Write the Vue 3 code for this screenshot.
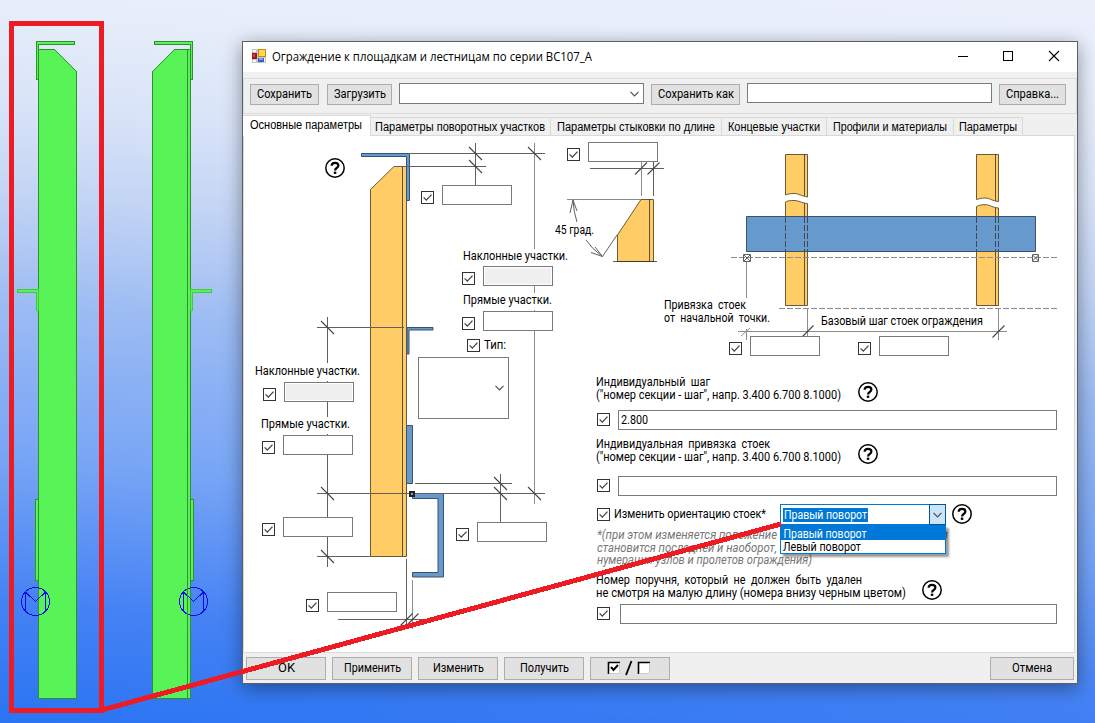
<script setup>
import { ref } from 'vue'

const tabs = [
  { title: 'Основные параметры', width: 128, text: 113 },
  { title: 'Параметры поворотных участков', width: 180, text: 171 },
  { title: 'Параметры стыковки по длине', width: 171, text: 159 },
  { title: 'Концевые участки', width: 105, text: 93 },
  { title: 'Профили и материалы', width: 127, text: 115 },
  { title: 'Параметры', width: 69, text: 59 },
]
const activeTab = ref(0)

// Controls pinned over the drawing; coordinates share the drawing's own space.
const originX = 244
const originY = 136
const pins = [
  { cx: 421, cy: 191, x: 442, y: 185 },
  { cx: 462, cy: 272, x: 483, y: 266, off: true },
  { cx: 462, cy: 317, x: 483, y: 311 },
  { cx: 567, cy: 148, x: 588, y: 142 },
  { cx: 263, cy: 388, x: 284, y: 382, off: true },
  { cx: 262, cy: 441, x: 283, y: 435 },
  { cx: 262, cy: 523, x: 283, y: 517 },
  { cx: 456, cy: 528, x: 477, y: 522 },
  { cx: 306, cy: 599, x: 327, y: 592 },
  { cx: 729, cy: 342, x: 750, y: 336 },
  { cx: 858, cy: 342, x: 879, y: 336 },
]
const at = (x, y) => ({ left: x - originX + 'px', top: y - originY + 'px' })

const captions = [
  { x: 463, y: 260, w: 105, t: 'Наклонные участки.' },
  { x: 463, y: 304, w: 89, t: 'Прямые участки.' },
  { x: 255, y: 375, w: 105, t: 'Наклонные участки.' },
  { x: 261, y: 428, w: 89, t: 'Прямые участки.' },
  { x: 484, y: 349, w: 22, t: 'Тип:' },
  { x: 555, y: 234, w: 39, t: '45 град.' },
  { x: 664, y: 309, w: 82, t: 'Привязка стоек', airy: true },
  { x: 664, y: 322, w: 106, t: 'от начальной точки.', airy: true },
  { x: 821, y: 325, w: 162, t: 'Базовый шаг стоек ограждения' },
]
const formText = [
  { x: 596, y: 386, w: 114, t: 'Индивидуальный шаг', airy: true },
  { x: 596, y: 399, w: 245, t: '("номер секции - шаг", напр. 3.400 6.700 8.1000)' },
  { x: 596, y: 448, w: 174, t: 'Индивидуальная привязка стоек', airy: true },
  { x: 596, y: 461, w: 245, t: '("номер секции - шаг", напр. 3.400 6.700 8.1000)' },
  { x: 614, y: 518, w: 152, t: 'Изменить ориентацию стоек*' },
  { x: 596, y: 584, w: 266, t: 'Номер поручня, который не должен быть удален', airy: true },
  { x: 596, y: 597, w: 310, t: 'не смотря на малую длину (номера внизу черным цветом)' },
]
const notes = [
  { x: 597, y: 539, w: 180, t: '*(при этом изменяется положение' },
  { x: 941, y: 539, w: 7, t: 'я' },
  { x: 597, y: 552, w: 180, t: 'становится последней и наоборот,' },
  { x: 597, y: 564, w: 215, t: 'нумерации узлов и пролетов ограждения)' },
]
const backslashes = [
  [475.5, 153.5], [475.5, 166.5], [534.5, 153.5], [327.5, 327.5], [327.5, 493.5],
  [327.5, 556.5], [500.5, 483.5], [500.5, 493.5], [534.5, 493.5],
]
const slashes = [
  [406.5, 619.5], [412.5, 619.5], [641, 168.5], [653.5, 168.5],
  [807.5, 331.5], [998.5, 331.5],
]
const helps = [[335, 168], [868, 392], [868, 454], [962, 514], [932, 590]]
const commands = [
  { t: 'OK', w: 17 },
  { t: 'Применить', w: 57 },
  { t: 'Изменить', w: 51 },
  { t: 'Получить', w: 49 },
]
const note = ref('2.800')
</script>

<template>
  <main class="desktop">
    <svg class="model" viewBox="0 0 242 723" shape-rendering="crispEdges">
      <defs>
        <g id="section">
          <path class="green" d="M38.5 49.5H54.5L76.5 71.5V698.5H38.5Z" />
          <path class="green" d="M36.5 41.5H74.5V44.5H38.5V79.5H36.5Z" />
          <path class="green pale" d="M17.5 289.5H38.5V310.5H36.5V292.5H17.5Z" />
          <path class="green" d="M35.5 499.5H38.5V580.5H35.5Z" />
          <circle class="mark" cx="35.5" cy="601.5" r="14" />
          <path class="mark" d="M25.5 611V592L35.5 601.5L45.5 592V611" />
        </g>
      </defs>
      <use href="#section" />
      <use href="#section" transform="translate(229 0) scale(-1 1)" />
      <path class="green" d="M187.5 50V698" />
    </svg>

    <section class="window">
      <header class="titlebar">
        <svg class="logo" viewBox="0 0 16 16">
          <path fill="#c4c4c4" d="M1 1h14v14H1z" />
          <path fill="#fff" d="M2 2h3v2H2zM7 10h2v4H7zM2 12h3v2H2zM13 10h1v4h-1z" />
          <path fill="#a4151b" d="M1 5h5v6H1z" /><path fill="#e0413d" d="M2 6h2v3H2z" />
          <path fill="#c98a10" d="M7 1h8v8H7z" /><path fill="#ffd65a" d="M8 2h6v6H8z" />
          <path fill="#2f62c8" d="M7 10h6v4H7z" /><path fill="#72a5f5" d="M8 10h4v2H8z" />
        </svg>
        <svg class="title" viewBox="0 0 330 20"><text x="0" y="14" textLength="320" lengthAdjust="spacingAndGlyphs">Ограждение к площадкам и лестницам по серии BC107_A</text></svg>
        <svg class="controls" viewBox="0 0 120 30">
          <path d="M5 14.5H15M50.5 9.5H59.5V18.5H50.5Z" shape-rendering="crispEdges" />
          <path d="M96 9L106 19M106 9L96 19" />
        </svg>
      </header>

      <div class="toolbar">
        <button class="btn save"><svg width="55" height="14"><text y="9.5" textLength="55" lengthAdjust="spacingAndGlyphs">Сохранить</text></svg></button>
        <button class="btn load"><svg width="52" height="14"><text y="9.5" textLength="52" lengthAdjust="spacingAndGlyphs">Загрузить</text></svg></button>
        <div class="box preset"><svg class="chev" viewBox="0 0 9 6"><path d="M.5 .8L4.5 4.8L8.5 .8" /></svg></div>
        <button class="btn saveas"><svg width="76" height="14"><text y="9.5" textLength="76" lengthAdjust="spacingAndGlyphs">Сохранить как</text></svg></button>
        <div class="box name"></div>
        <button class="btn help"><svg width="53" height="14"><text y="9.5" textLength="53" lengthAdjust="spacingAndGlyphs">Справка...</text></svg></button>
      </div>

      <nav class="tabs">
        <button
          v-for="(tab, i) in tabs" :key="tab.title" class="tab" :class="{ active: i === activeTab }"
          :style="{ width: tab.width + 'px' }" @click="activeTab = i"
        ><svg :width="tab.text" height="16"><text y="11.5" :textLength="tab.text - 1" lengthAdjust="spacingAndGlyphs">{{ tab.title }}</text></svg></button>
      </nav>

      <div class="page">
        <svg class="drawing" viewBox="244 136 830 516">
          <!-- railing post section -->
          <path class="wood" d="M370.5 189.5L394 166.5H406.5V556.5H370.5Z" />
          <path class="ink" d="M402.5 166V556" />
          <path class="steel" d="M361.5 153.5H409.5V200.5H406.5V156.5H361.5Z" />
          <path class="steel" d="M407 327.5H433V330H409V354H407Z" />
          <path class="steel" d="M406.5 425.5H412.5V483.5H406.5Z" />
          <path class="steel" d="M412.5 493.5H443.5V577H412.5V572.5H438V498.5H412.5Z" />
          <path class="dim" d="M410 153.5H545M394 166.5H486M475.5 143V185M317 327.5H404M317 493.5H545M317 556.5H370M415 483.5H512M500.5 474V522M406.5 559V629M338 619.5H425" />
          <path class="dim" d="M327.5 317V363M327.5 381V382M327.5 402V417M327.5 434V435M327.5 455V517M327.5 537V567" />
          <path class="dim soft" d="M534.5 143V249M534.5 286V293M534.5 310V311M534.5 331V504M412.5 580V629" />
          <path fill="#222" d="M409 491h6v6h-6z" /><path fill="#99a" d="M411 493h2v2h-2z" />

          <!-- cut corner detail -->
          <path class="wood" d="M641 199.5L617.5 235V261.5H653.5V199.5Z" />
          <path class="ink" d="M649.5 199V261M613 261.5H657" />
          <path class="dim" d="M590 168.5H664M653.5 162V196M617 235L602.5 256.5M573 200Q573.5 212 577 222M570 213L573 200L577 211M586 240Q592 249 602.5 256.5L591 252.5M602.5 256.5L595 247" />
          <path class="dim soft" d="M641.5 162V196M567 199.5H641" />

          <!-- post layout along the handrail -->
          <path class="wood" d="M785.5 154.5H807.5V197C801 196 799 193.5 794 193.5C790 193.5 788 194 785.5 195Z" />
          <path class="wood" d="M785.5 305.5V202C788 200.5 791 200.5 794 200.5C799 200.5 801 203 807.5 203.5V305.5Z" />
          <path class="wood" d="M976.5 154.5H998.5V201.5C992 201 990 198 985 198C981 198 979 199 976.5 199.5Z" />
          <path class="wood" d="M976.5 305.5V206.5C979 205 982 204.7 985 204.7C990 204.7 992 207.5 998.5 208V305.5Z" />
          <path class="ink" d="M804.5 154V196M804.5 203V305M995.5 154V201M995.5 208V305" />
          <path class="steel" d="M746.5 216.5H1035.5V251.5H746.5Z" />
          <path class="ink dash" d="M785.5 217V251M804.5 217V251M807.5 217V251M976.5 217V251M995.5 217V251M998.5 217V251" />
          <path class="dim soft dash" d="M731 257.5H1057M779 308.5H1057" />
          <path class="dim" d="M743.5 254.5H750.5V261.5H743.5ZM744 255L750 261M750 255L744 261M1032.5 254.5H1038.5V261.5H1032.5ZM1032.5 255L1038.5 261M1038.5 255L1032.5 261" />
          <path class="dim soft" d="M746.5 262V298M746.5 329V340M807.5 308V336M998.5 308V340M738 331.5H1007M741 336L750 328" />

          <path v-for="([x, y], i) in backslashes" :key="'b' + i" class="tick" :d="`M${x - 6.5} ${y - 6.5}l13 13`" />
          <path v-for="([x, y], i) in slashes" :key="'s' + i" class="tick" :d="`M${x - 6} ${y + 6}l12 -12`" />
          <text v-for="c in captions" :key="c.x + '-' + c.y" :class="{ airy: c.airy }" :x="c.x" :y="c.y" :textLength="c.w" lengthAdjust="spacingAndGlyphs">{{ c.t }}</text>
          <text v-for="c in formText" :key="'f' + c.y" :class="{ airy: c.airy }" :x="c.x" :y="c.y" :textLength="c.w" lengthAdjust="spacingAndGlyphs">{{ c.t }}</text>
          <text v-for="(c, i) in notes" :key="'n' + i" class="note" :x="c.x" :y="c.y" :textLength="c.w" lengthAdjust="spacingAndGlyphs">{{ c.t }}</text>
          <g v-for="([x, y], i) in helps" :key="'h' + i" class="q">
            <circle :cx="x" :cy="y" r="9.2" />
            <path :d="`M${x - 3.4} ${y - 2.2}q.2 -3 3.4 -3q3.4 0 3.4 2.7q0 1.4 -1.7 2.5q-1.6 1 -1.6 2.4`" />
            <path :d="`M${x - 1.2} ${y + 3.6}h2.5v2.3h-2.5z`" class="dot" />
          </g>
        </svg>

        <template v-for="(p, i) in pins" :key="i">
          <i class="check pin" :style="at(p.cx, p.cy)"><svg viewBox="0 0 11 11"><path d="M1.6 5.4L4.3 8.1L9.5 2.6" /></svg></i>
          <div class="box field pin" :class="{ off: p.off }" :style="at(p.x, p.y)"></div>
        </template>
        <i class="check pin" :style="at(467, 339)"><svg viewBox="0 0 11 11"><path d="M1.6 5.4L4.3 8.1L9.5 2.6" /></svg></i>
        <div class="box kind pin" :style="at(418, 357)"><svg class="chev" viewBox="0 0 9 6"><path d="M.5 .8L4.5 4.8L8.5 .8" /></svg></div>

        <form class="form" @submit.prevent>
          <div class="row first"><i class="check"><svg viewBox="0 0 11 11"><path d="M1.6 5.4L4.3 8.1L9.5 2.6" /></svg></i><div class="box wide"><svg width="40" height="16"><text y="12" textLength="27" lengthAdjust="spacingAndGlyphs">{{ note }}</text></svg></div></div>
          <div class="row second"><i class="check"><svg viewBox="0 0 11 11"><path d="M1.6 5.4L4.3 8.1L9.5 2.6" /></svg></i><div class="box wide"></div></div>
          <div class="row turn">
            <i class="check"><svg viewBox="0 0 11 11"><path d="M1.6 5.4L4.3 8.1L9.5 2.6" /></svg></i>
            <div class="combo">
              <span class="picked"><svg width="85" height="14"><text x="1" y="10.5" textLength="83" lengthAdjust="spacingAndGlyphs">Правый поворот</text></svg></span>
              <span class="arrow"><svg class="chev" viewBox="0 0 9 6"><path d="M.5 .8L4.5 4.8L8.5 .8" /></svg></span>
              <ul class="menu">
                <li class="on"><svg width="85" height="13"><text x=".5" y="11.5" textLength="83" lengthAdjust="spacingAndGlyphs">Правый поворот</text></svg></li>
                <li><svg width="85" height="13"><text y="10.5" textLength="78" lengthAdjust="spacingAndGlyphs">Левый поворот</text></svg></li>
              </ul>
            </div>
          </div>
          <div class="row last"><i class="check"><svg viewBox="0 0 11 11"><path d="M1.6 5.4L4.3 8.1L9.5 2.6" /></svg></i><div class="box wide"></div></div>
        </form>
      </div>

      <footer class="footer">
        <button v-for="c in commands" :key="c.t" class="btn cmd"><svg :width="c.w" height="14"><text y="10" :textLength="c.w" lengthAdjust="spacingAndGlyphs">{{ c.t }}</text></svg></button>
        <button class="btn cmd">
          <svg class="toggle" width="44" height="18" viewBox="0 0 44 18">
            <path d="M1 3h12v12H1zM31 3h12v12H31z" fill="#fff" />
            <path d="M1.5 15V3.5H13M31.5 15V3.5H43" fill="none" stroke="#000" stroke-width="1.6" />
            <path d="M2 14.5H12.5V4M32 14.5H42.5V4" fill="none" stroke="#ccc" />
            <path d="M4 8l2.5 3L11 6" fill="none" stroke="#000" stroke-width="2" />
            <path d="M19 16L24.5 2" stroke="#000" stroke-width="1.8" />
          </svg>
        </button>
        <button class="btn cancel"><svg width="40" height="14"><text y="10" textLength="40" lengthAdjust="spacingAndGlyphs">Отмена</text></svg></button>
      </footer>
    </section>

    <svg class="callout" viewBox="0 0 1095 723" shape-rendering="crispEdges">
      <path d="M11.5 23.5H101.5V710.5H11.5Z" />
      <path d="M102 710L781 524" />
    </svg>
  </main>
</template>

<style>
html, body { margin: 0; overflow: hidden; }
</style>

<style scoped>
* { box-sizing: border-box; }
.desktop {
  position: relative; width: 1095px; height: 723px; overflow: hidden;
  font-family: Roboto, "Liberation Sans", sans-serif; font-size: 12px; color: #000;
  background: linear-gradient(185deg, #ebf0fb 0, #e7eefa 12%, #d9e4f8 24%, #c1d3f4 36%, #9bbbf3 49%, #76a4f5 68%, #4582f4 85%, #2a74f3 100%);
}
svg { display: block; flex: none; overflow: visible; }
text { font-size: 12px; fill: #000; }
.airy { word-spacing: 3px; }
.model { position: absolute; left: 0; top: 0; width: 242px; height: 723px; }
.green { fill: #57f357; stroke: #2f912f; }
.pale { stroke: #43c843; }
.mark { fill: none; stroke: #0a0af0; }
.callout { position: absolute; inset: 0; width: 1095px; height: 723px; pointer-events: none; }
.callout path { fill: none; stroke: #ed1c24; stroke-width: 5; }
.window {
  position: absolute; left: 242px; top: 41px; width: 836px; height: 643px;
  display: flex; flex-direction: column; background: #f0f0f0; border: 1px solid #5a5f69;
  box-shadow: 0 4px 18px rgba(0, 0, 0, .4);
}
.titlebar { display: flex; align-items: center; height: 30px; background: #fff; padding-left: 8px; }
.logo { width: 16px; height: 16px; margin-top: -2px; }
.title { width: 330px; height: 20px; margin-left: 5px; }
.title text { font-family: "Open Sans", "Noto Sans", sans-serif; font-size: 12px; }
.controls { width: 120px; height: 30px; margin-left: auto; margin-right: 4px; }
.controls path { fill: none; stroke: #000; stroke-width: 1.1; }
.toolbar {
  display: flex; height: 36px; margin-top: 6px; padding: 4px 0 0 6px;
  border: 1px solid #dcdcdc;
}
.btn {
  display: flex; align-items: center; justify-content: center; flex: none;
  padding: 0; font: inherit; background: #e1e1e1; border: 1px solid #adadad;
}
.toolbar .btn { height: 21px; margin-top: 1px; }
.box { background: #fff; border: 1px solid #7a7a7a; }
.chev { width: 9px; height: 6px; }
.chev path { fill: none; stroke: #505050; stroke-width: 1.2; }
.save { width: 69px; }
.load { width: 65px; margin-left: 8px; }
.preset { display: flex; align-items: center; justify-content: flex-end; width: 245px; height: 21px; margin-left: 7px; padding-right: 4px; }
.saveas { width: 89px; margin-left: 7px; }
.name { width: 245px; height: 20px; margin-left: 7px; }
.help { width: 67px; margin-left: 7px; }
.tabs { display: flex; align-items: flex-end; height: 20px; margin-top: 1px; }
.tab {
  display: flex; align-items: center; justify-content: center; height: 18px; padding: 0;
  background: #f0f0f0; border: 1px solid #d9d9d9; border-bottom: 0; border-left: 0;
}
.tab.active { position: relative; z-index: 1; height: 21px; padding-bottom: 2px; background: #fff; margin-bottom: -1px; }
.page {
  position: relative; width: 832px; height: 518px; background: #fff; border: 1px solid #d9d9d9;
}
.drawing { position: absolute; left: 0; top: 0; width: 830px; height: 516px; }
.wood { fill: #fc6; stroke: #6b5a3a; }
.steel { fill: #69c; stroke: #3c5268; }
.ink { fill: none; stroke: #333; stroke-opacity: .8; }
.dim { fill: none; stroke: #606060; }
.soft { stroke: #8c8c8c; }
.dash { stroke-dasharray: 6 2; }
.tick { fill: none; stroke: #444; stroke-width: 1.1; }
.note { fill: #777; font-style: italic; }
.q circle { fill: #fff; stroke: #000; stroke-width: 1.5; }
.q path { fill: none; stroke: #000; stroke-width: 2.2; }
.q .dot { fill: #000; stroke: none; }
.pin { position: absolute; }
.check { display: block; flex: none; width: 13px; height: 13px; background: #fff; border: 1px solid #333; }
.check svg { width: 11px; height: 11px; }
.check path { fill: none; stroke: #444; stroke-width: 1.3; }
.field { width: 70px; height: 20px; }
.off { background: #f0f0f0; box-shadow: inset 0 0 0 1px #fff; }
.kind { display: flex; align-items: center; justify-content: flex-end; width: 91px; height: 62px; padding-right: 4px; }
.form { position: absolute; left: 353px; top: 274px; width: 460px; }
.row { display: flex; align-items: flex-start; height: 20px; }
.row .check { margin-top: 3px; }
.wide { display: flex; align-items: center; flex: 1; height: 20px; margin-left: 8px; padding-left: 2px; }
.second { margin-top: 46px; }
.turn { height: 21px; margin-top: 8px; }
.turn .check { margin-top: 4px; }
.last { margin-top: 79px; }
.last .wide { margin-left: 10px; }
.combo { position: relative; display: flex; align-items: center; width: 166px; height: 21px; margin-left: 170px; background: #fff; border: 1px solid #0078d7; }
.picked { height: 14px; margin-left: 2px; background: #0078d7; }
.picked text, .on text { fill: #fff; }
.arrow { display: flex; align-items: center; justify-content: center; width: 17px; height: 21px; margin: 0 -1px 0 auto; background: #cce4f7; border: 1px solid #00559b; }
.menu { position: absolute; left: -1px; top: 20px; width: 166px; height: 29px; margin: 0; padding: 0; list-style: none; background: #fff; border: 1px solid #0078d7; box-shadow: 3px 3px 2px rgba(0, 0, 0, .4); }
.menu li { height: 13px; padding-left: 2px; }
.menu .on { height: 14px; background: #0078d7; }
.footer { display: flex; gap: 6px; padding: 4px 3px 0; }
.cmd { width: 80px; height: 23px; }
.toggle { margin: -2px 2px 0 0; }
.cancel { width: 84px; height: 23px; margin-left: auto; }
</style>
